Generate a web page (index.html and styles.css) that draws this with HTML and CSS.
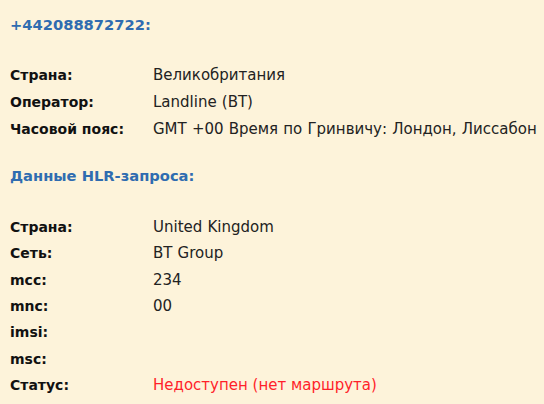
FILE: index.html
```html
<!DOCTYPE html>
<html lang="ru">
<head>
<meta charset="utf-8">
<link rel="stylesheet" href="styles.css">
</head>
<body>
<div class="page">
  <h2 class="title">+442088872722:</h2>
  <div class="info info-main">
    <div class="label">Страна:</div><div class="value">Великобритания</div>
    <div class="label">Оператор:</div><div class="value">Landline (BT)</div>
    <div class="label">Часовой пояс:</div><div class="value">GMT +00 Время по Гринвичу: Лондон, Лиссабон</div>
  </div>
  <h2 class="title">Данные HLR-запроса:</h2>
  <div class="info info-hlr">
    <div class="label">Страна:</div><div class="value">United Kingdom</div>
    <div class="label">Сеть:</div><div class="value">BT Group</div>
    <div class="label">mcc:</div><div class="value">234</div>
    <div class="label">mnc:</div><div class="value">00</div>
    <div class="label">imsi:</div><div class="value"></div>
    <div class="label">msc:</div><div class="value"></div>
    <div class="label">Статус:</div><div class="value error">Недоступен (нет маршрута)</div>
  </div>
</div>
</body>
</html>
```
FILE: styles.css
```css
html, body {
  margin: 0;
  padding: 0;
  background: #fdf3da;
}
.page {
  padding: 14px 0 0 10px;
  font-family: "DejaVu Sans", sans-serif;
  font-size: 15px;
  color: #1a1a1a;
}
.title {
  margin: 0 0 25px 0;
  font-size: 14.7px;
  line-height: 22px;
  font-weight: bold;
  color: #2f6cb0;
}
.info {
  display: grid;
  grid-template-columns: 143px 1fr;
  align-items: center;
  white-space: nowrap;
}
.info-main {
  grid-auto-rows: 27px;
  margin-bottom: 23px;
}
.info-hlr {
  grid-auto-rows: 26.3px;
  padding-top: 2px;
}
.label {
  font-weight: bold;
  font-size: 14px;
  color: #111;
}
.value {
  color: #222;
  word-spacing: 0.4px;
}
.error {
  color: #ff1f2a;
  word-spacing: 0;
}
```
